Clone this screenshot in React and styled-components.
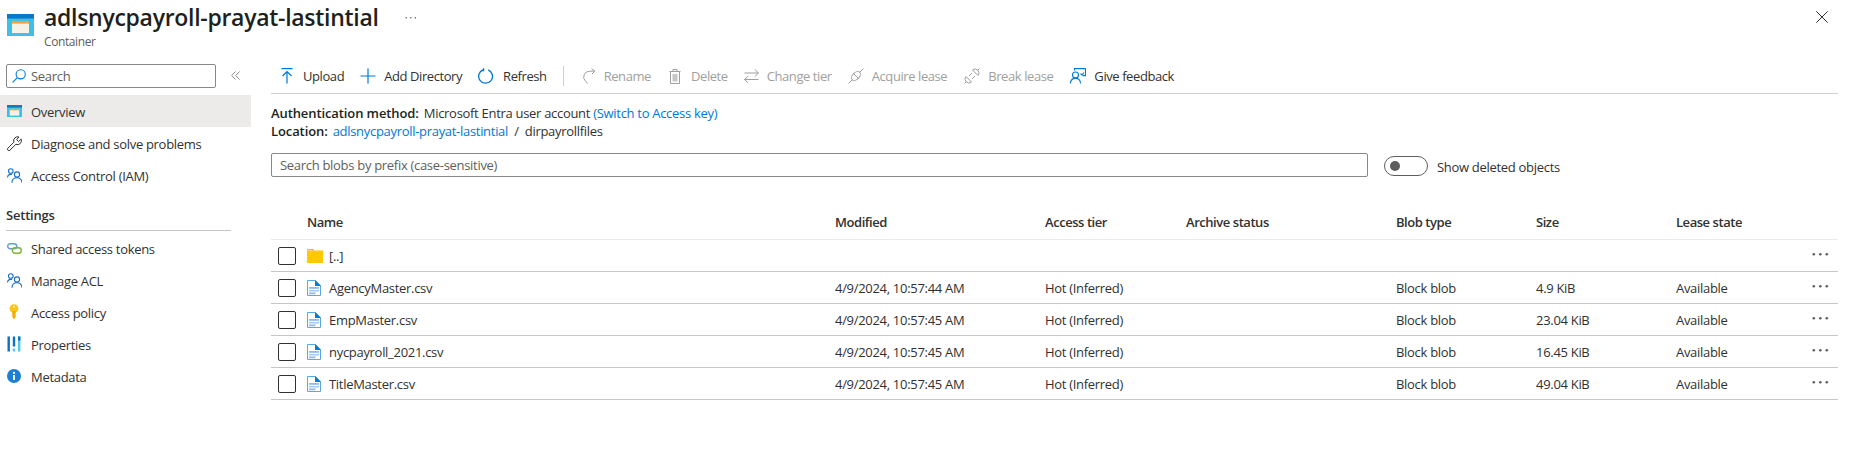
import React from 'react';
import styled, { createGlobalStyle } from 'styled-components';

const GlobalStyle = createGlobalStyle`
  html, body {
    margin: 0;
    padding: 0;
    overflow: hidden;
    background: #fff;
  }
  body {
    font-family: "Open Sans", "Noto Sans", "Liberation Sans", sans-serif;
    font-size: 13px;
    letter-spacing: -0.3px;
    color: #323130;
  }
  * {
    box-sizing: border-box;
  }
`;

const Page = styled.div`
  width: 1849px;
  height: 459px;
  display: flex;
  flex-direction: column;
`;

const Header = styled.header`
  height: 57px;
  display: flex;
  align-items: flex-start;
  padding: 0 21px 0 7px;
`;

const HeaderIcon = styled.div`
  display: flex;
  margin: 14px 10px 0 0;
`;

const TitleBlock = styled.div`
  display: flex;
  flex-direction: column;
`;

const Title = styled.h1`
  margin: 0;
  padding-top: 1px;
  font-size: 23px;
  line-height: 32px;
  font-weight: 600;
  letter-spacing: -0.29px;
  color: #201f1e;
`;

const Subtitle = styled.div`
  font-size: 12px;
  line-height: 16px;
  padding-top: 1px;
  letter-spacing: -0.4px;
  color: #605e5c;
`;

const TitleMore = styled.div`
  display: flex;
  margin: 16px 0 0 26px;
`;

const CloseButton = styled.div`
  display: flex;
  margin: 11px 0 0 auto;
`;

const Body = styled.div`
  display: flex;
  flex: 1;
  min-height: 0;
`;

const Sidebar = styled.nav`
  width: 251px;
  flex: none;
  margin-right: 20px;
`;

const SideSearchRow = styled.div`
  display: flex;
  align-items: flex-start;
  padding: 7px 0 0 6px;
  height: 38px;
`;

const SideSearch = styled.div`
  width: 210px;
  height: 24px;
  border: 1px solid #8a8886;
  border-radius: 2px;
  display: flex;
  align-items: center;
  gap: 5px;
  padding-left: 5px;
  color: #605e5c;
`;

const Collapse = styled.div`
  display: flex;
  margin: 7px 0 0 15px;
`;

const NavItem = styled.div`
  height: 32px;
  display: flex;
  align-items: center;
  gap: 9px;
  padding: 1px 0 0 6px;
  background: ${props => (props.$active ? '#edebe9' : 'transparent')};
`;

const NavIcon = styled.span`
  width: 16px;
  height: 16px;
  margin-top: -1px;
  display: flex;
  align-items: center;
  justify-content: center;
`;

const NavGroup = styled.div`
  margin-top: ${props => props.$top || 0}px;
`;

const SectionTitle = styled.div`
  margin: 16px 20px 0 6px;
  height: 24px;
  border-bottom: 1px solid #c8c6c4;
  font-weight: 600;
  font-size: 13px;
  line-height: 16px;
  letter-spacing: -0.2px;
`;

const Main = styled.main`
  flex: 1;
  margin-right: 11px;
  min-width: 0;
`;

const Toolbar = styled.div`
  height: 37px;
  padding: 2px 0 0 10px;
  display: flex;
  align-items: center;
  border-bottom: 1px solid #d2d0ce;
  letter-spacing: -0.42px;
`;

const ToolButton = styled.div`
  display: flex;
  align-items: center;
  margin-right: ${props => props.$gap ?? 16}px;
  color: ${props => (props.$disabled ? '#a19f9d' : '#323130')};
  white-space: nowrap;
`;

const ToolIcon = styled.span`
  display: flex;
  justify-content: center;
  width: ${props => props.$w}px;
  margin-right: ${props => props.$pad ?? 8}px;
`;

const ToolSeparator = styled.div`
  width: 1px;
  height: 20px;
  background: #d2d0ce;
  margin-right: 18px;
`;

const InfoBlock = styled.div`
  padding-top: 10px;
  line-height: 18px;
`;

const InfoRow = styled.div`
  display: flex;
  gap: 5px;
  white-space: pre;
`;

const InfoLabel = styled.span`
  font-weight: 600;
  letter-spacing: -0.1px;
  color: #201f1e;
`;

const InfoLink = styled.span`
  color: #0078d4;
`;

const FilterRow = styled.div`
  display: flex;
  align-items: center;
  margin-top: 13px;
`;

const FilterInput = styled.div`
  width: 1097px;
  height: 24px;
  border: 1px solid #8a8886;
  border-radius: 2px;
  padding-left: 8px;
  line-height: 23px;
  color: #605e5c;
`;

const Switch = styled.div`
  width: 44px;
  height: 20px;
  margin: 2px 9px 0 16px;
  border: 1px solid #605e5c;
  border-radius: 10px;
  display: flex;
  align-items: center;
  padding-left: 5px;
  &::before {
    content: '';
    width: 10px;
    height: 10px;
    border-radius: 50%;
    background: #605e5c;
  }
`;

const SwitchLabel = styled.span`
  margin-top: 3px;
`;

const Table = styled.div`
  margin-top: 30px;
`;

const Row = styled.div`
  display: grid;
  grid-template-columns: 36px 528px 210px 141px 210px 140px 140px 136px 26px;
  align-items: center;
  height: ${props => (props.$head ? 33 : 32)}px;
  padding-bottom: ${props => (props.$head ? 2 : 0)}px;
  border-bottom: 1px solid ${props => (props.$head ? '#edebe9' : '#c8c6c4')};
`;

const HeadCell = styled.div`
  font-weight: 600;
  letter-spacing: -0.45px;
  color: #323130;
  grid-column: ${props => props.$col || 'auto'};
`;

const Cell = styled.div`
  white-space: nowrap;
  color: #323130;
`;

const CheckBox = styled.div`
  width: 18px;
  height: 18px;
  margin-left: 7px;
  border: 1px solid #323130;
  border-radius: 2px;
`;

const NameCell = styled.div`
  display: flex;
  align-items: center;
  gap: ${props => props.$gap}px;
  white-space: nowrap;
`;

const RowMore = styled.div`
  display: flex;
  justify-content: flex-start;
  padding-bottom: 3px;
`;

/* drawings */

const ContainerIcon = ({ size }) => (
  <svg width={size} height={size * 0.82} viewBox="0 0 27 22">
    <rect x="0" y="0" width="27" height="22" fill="#3cc0e6" />
    <rect x="0" y="0" width="27" height="4.5" fill="#0a78c8" />
    <rect x="5" y="7" width="17" height="12" fill="#f6f3e6" />
    <rect x="5" y="7" width="17" height="2.5" fill="#f0a03c" />
  </svg>
);

const Dots = ({ color, r, spacing }) => (
  <svg width={spacing * 2 + r * 2 + 1} height={r * 2 + 2}>
    {[0, 1, 2].map(i => (
      <circle key={i} cx={r + 0.5 + i * spacing} cy={r + 1} r={r} fill={color} />
    ))}
  </svg>
);

const Line = ({ w, h, children, stroke = '#0078d4', sw = 1.2, vb }) => (
  <svg width={w} height={h} viewBox={vb || `0 0 ${w} ${h}`} fill="none" stroke={stroke} strokeWidth={sw}>
    {children}
  </svg>
);

const DISABLED = '#a19f9d';

const UploadIcon = () => (
  <Line w={12} h={16}>
    <path d="M0.5 0.7H11.5M6 15.5V3.5M1.5 8L6 3.5L10.5 8" />
  </Line>
);
const PlusIcon = () => (
  <Line w={16} h={16}>
    <path d="M8 0.5V15.5M0.5 8H15.5" />
  </Line>
);
const RefreshIcon = () => (
  <Line w={16} h={16} sw={1.3}>
    <path d="M10.2 1.9A6.9 6.9 0 1 1 5.2 1.8" />
    <path d="M5.6 0.2V2.6H3" />
  </Line>
);
const RenameIcon = () => (
  <Line w={14} h={16} stroke={DISABLED} sw={1}>
    <path d="M13 3.2H7.5A5.8 5.8 0 0 0 3.6 13.3L5.6 15.5" />
    <path d="M9.5 0.6L12.8 3.2L10 6" />
  </Line>
);
const TrashIcon = () => (
  <Line w={12} h={15} stroke={DISABLED} sw={1}>
    <path d="M0.5 2.5H11.5M4 2.5V0.5H8V2.5M1.5 2.5V14.5H10.5V2.5" />
    <rect x="3.5" y="5" width="5" height="7.5" fill="#c8c6c4" stroke="none" />
  </Line>
);
const SwapIcon = () => (
  <Line w={15} h={14} stroke={DISABLED} sw={1}>
    <path d="M0.5 4H14.5M10.8 0.5L14.5 4L10.8 7.5M14.5 10.5H0.5M4.2 7L0.5 10.5L4.2 14" />
  </Line>
);
const PlugIcon = () => (
  <Line w={16} h={16} stroke={DISABLED} sw={1}>
    <path d="M0.5 15.5L4.5 11.5M11.5 4.5L15.5 0.5" />
    <ellipse cx="8" cy="8" rx="5.3" ry="3.4" transform="rotate(-45 8 8)" />
    <path d="M5.5 5.5L10.5 10.5" />
  </Line>
);
const BreakPlugIcon = () => (
  <Line w={16} h={16} stroke={DISABLED} sw={1}>
    <path d="M0.5 15.5L2.5 13.5M13.5 2.5L15.5 0.5" />
    <path d="M2 8.5L7.5 14A3.9 3.9 0 0 1 2 8.5Z" />
    <path d="M8.5 2L14 7.5A3.9 3.9 0 0 0 8.5 2Z" />
    <path d="M5 8L8 5M8 11L11 8" />
  </Line>
);
const FeedbackIcon = () => (
  <Line w={16} h={16} stroke="#0078d4" sw={1.1}>
    <path d="M4.5 2.5V0.6H15.5V7.6H12.5" />
    <circle cx="5.5" cy="7" r="3" />
    <path d="M0.5 15.5C0.5 12 2.5 10.4 5.5 10.4S10.5 12 10.5 15.5" />
    <path d="M10.5 5.5L12 7L14 4.5" />
  </Line>
);
const SearchIcon = () => (
  <Line w={14} h={14} sw={1.1}>
    <circle cx="8.7" cy="5.3" r="4.6" />
    <path d="M5.4 8.6L0.6 13.4" />
  </Line>
);
const ChevronsIcon = () => (
  <Line w={9} h={9} stroke="#8a8886" sw={1}>
    <path d="M4.5 0.5L0.7 4.5L4.5 8.5M8.5 0.5L4.7 4.5L8.5 8.5" />
  </Line>
);
const CloseIcon = () => (
  <Line w={12} h={12} stroke="#323130" sw={1}>
    <path d="M0.3 0.3L11.7 11.7M11.7 0.3L0.3 11.7" />
  </Line>
);
const WrenchIcon = () => (
  <Line w={15} h={15} stroke="#323130" sw={1}>
    <path d="M14.2 3.1L11.6 5.6L9.6 3.6L12 1A4 4 0 0 0 6.9 6.2L0.9 12.2A1.4 1.4 0 0 0 2.9 14.2L8.9 8.3A4 4 0 0 0 14.2 3.1Z" />
  </Line>
);
const PeopleIcon = () => (
  <Line w={15} h={15} stroke="#1a6fc9" sw={1.1}>
    <circle cx="3.8" cy="3" r="2.3" />
    <circle cx="10" cy="6.5" r="2.6" />
    <path d="M0.6 9.5C0.6 7.5 1.8 6.4 3.8 6.4H5" />
    <path d="M5 14.8C5 11.5 7 9.8 10 9.8S15 11.5 15 14.8" />
  </Line>
);
const LinkIcon = () => (
  <svg width="15" height="11" viewBox="0 0 15 11" fill="none" strokeWidth="1.4">
    <rect x="0.7" y="0.7" width="9" height="5" rx="2.5" stroke="#5ea0d8" />
    <rect x="5.3" y="4.8" width="9" height="5.4" rx="2.7" stroke="#7fb239" />
  </svg>
);
const KeyIcon = () => (
  <svg width="10" height="16" viewBox="0 0 10 16">
    <circle cx="5" cy="4.6" r="4.4" fill="#fcc419" />
    <path d="M3.4 7H6.6V13L5 15.6L3.4 13Z" fill="#f5a900" />
    <circle cx="5" cy="2.7" r="1" fill="#fff3c4" />
  </svg>
);
const PropsIcon = () => (
  <svg width="14" height="16" viewBox="0 0 14 16">
    <rect x="0.5" y="0.5" width="2.4" height="15" fill="#0f70bf" />
    <rect x="5.8" y="0.5" width="2.4" height="10" fill="#0f70bf" />
    <rect x="5.8" y="12.5" width="2.4" height="3" fill="#50c8ef" />
    <rect x="11" y="0.5" width="2.4" height="15" fill="#50c8ef" />
    <rect x="11" y="0.5" width="2.4" height="4" fill="#0f70bf" />
  </svg>
);
const InfoIcon = () => (
  <svg width="14" height="14" viewBox="0 0 14 14">
    <circle cx="7" cy="7" r="7" fill="#1b7fd4" />
    <rect x="6.1" y="6" width="1.8" height="5" fill="#fff" />
    <circle cx="7" cy="3.9" r="1.1" fill="#fff" />
  </svg>
);
const FolderIcon = () => (
  <svg width="16" height="14" viewBox="0 0 16 14">
    <path d="M0 1C0 0.4 0.4 0 1 0H6L7.5 1.5H0Z" fill="#e8a800" />
    <rect x="0" y="1.5" width="16" height="12.5" fill="#ffc800" />
    <rect x="1" y="0.6" width="3.5" height="1" fill="#fde7a0" />
  </svg>
);
const FileIcon = () => (
  <svg width="14" height="16" viewBox="0 0 14 16">
    <path d="M0.5 0.5H8.5L13.5 5.5V15.5H0.5Z" fill="#fff" stroke="#5ba8e5" />
    <path d="M8 0L14 6H8Z" fill="#0f78d0" />
    <rect x="2" y="7" width="10" height="1.8" fill="#8fbcea" />
    <rect x="2" y="9.8" width="10" height="1.8" fill="#a8cdf0" />
    <rect x="2" y="12.5" width="6.5" height="1.8" fill="#8fbcea" />
  </svg>
);

const tools = [
  { label: 'Upload', icon: <UploadIcon />, w: 12, gap: 16, pad: 10 },
  { label: 'Add Directory', icon: <PlusIcon />, w: 16, gap: 16 },
  { label: 'Refresh', icon: <RefreshIcon />, w: 16, gap: 16, pad: 9 },
  { sep: true },
  { label: 'Rename', icon: <RenameIcon />, w: 14, gap: 18, disabled: true },
  { label: 'Delete', icon: <TrashIcon />, w: 12, gap: 16, pad: 10, disabled: true },
  { label: 'Change tier', icon: <SwapIcon />, w: 15, gap: 16, disabled: true },
  { label: 'Acquire lease', icon: <PlugIcon />, w: 16, gap: 17, disabled: true },
  { label: 'Break lease', icon: <BreakPlugIcon />, w: 16, gap: 17, disabled: true },
  { label: 'Give feedback', icon: <FeedbackIcon />, w: 16, gap: 0 },
];

const files = [
  { name: 'AgencyMaster.csv', modified: '4/9/2024, 10:57:44 AM', size: '4.9 KiB' },
  { name: 'EmpMaster.csv', modified: '4/9/2024, 10:57:45 AM', size: '23.04 KiB' },
  { name: 'nycpayroll_2021.csv', modified: '4/9/2024, 10:57:45 AM', size: '16.45 KiB' },
  { name: 'TitleMaster.csv', modified: '4/9/2024, 10:57:45 AM', size: '49.04 KiB' },
];

function App() {
  return (
    <Page>
      <GlobalStyle />
      <Header>
        <HeaderIcon><ContainerIcon size={27} /></HeaderIcon>
        <TitleBlock>
          <Title>adlsnycpayroll-prayat-lastintial</Title>
          <Subtitle>Container</Subtitle>
        </TitleBlock>
        <TitleMore><Dots color="#605e5c" r={0.8} spacing={4.5} /></TitleMore>
        <CloseButton><CloseIcon /></CloseButton>
      </Header>
      <Body>
        <Sidebar>
          <SideSearchRow>
            <SideSearch><SearchIcon />Search</SideSearch>
            <Collapse><ChevronsIcon /></Collapse>
          </SideSearchRow>
          <NavItem $active><NavIcon><ContainerIcon size={15} /></NavIcon>Overview</NavItem>
          <NavItem><NavIcon><WrenchIcon /></NavIcon>Diagnose and solve problems</NavItem>
          <NavItem><NavIcon><PeopleIcon /></NavIcon>Access Control (IAM)</NavItem>
          <SectionTitle>Settings</SectionTitle>
          <NavGroup $top={1}>
            <NavItem><NavIcon><LinkIcon /></NavIcon>Shared access tokens</NavItem>
            <NavItem><NavIcon><PeopleIcon /></NavIcon>Manage ACL</NavItem>
            <NavItem><NavIcon><KeyIcon /></NavIcon>Access policy</NavItem>
            <NavItem><NavIcon><PropsIcon /></NavIcon>Properties</NavItem>
            <NavItem><NavIcon><InfoIcon /></NavIcon>Metadata</NavItem>
          </NavGroup>
        </Sidebar>
        <Main>
          <Toolbar>
            {tools.map((t, i) =>
              t.sep ? (
                <ToolSeparator key={i} />
              ) : (
                <ToolButton key={t.label} $disabled={t.disabled} $gap={t.gap}>
                  <ToolIcon $w={t.w} $pad={t.pad}>{t.icon}</ToolIcon>
                  {t.label}
                </ToolButton>
              )
            )}
          </Toolbar>
          <InfoBlock>
            <InfoRow>
              <InfoLabel>Authentication method:</InfoLabel>
              <span>Microsoft Entra user account <InfoLink>(Switch to Access key)</InfoLink></span>
            </InfoRow>
            <InfoRow>
              <InfoLabel>Location:</InfoLabel>
              <span><InfoLink>adlsnycpayroll-prayat-lastintial</InfoLink>  /  dirpayrollfiles</span>
            </InfoRow>
          </InfoBlock>
          <FilterRow>
            <FilterInput>Search blobs by prefix (case-sensitive)</FilterInput>
            <Switch />
            <SwitchLabel>Show deleted objects</SwitchLabel>
          </FilterRow>
          <Table>
            <Row $head>
              <HeadCell $col="2">Name</HeadCell>
              <HeadCell>Modified</HeadCell>
              <HeadCell>Access tier</HeadCell>
              <HeadCell>Archive status</HeadCell>
              <HeadCell>Blob type</HeadCell>
              <HeadCell>Size</HeadCell>
              <HeadCell>Lease state</HeadCell>
            </Row>
            <Row>
              <CheckBox />
              <NameCell $gap={6}><FolderIcon />[..]</NameCell>
              <Cell /><Cell /><Cell /><Cell /><Cell /><Cell />
              <RowMore><Dots color="#605e5c" r={1.3} spacing={6.5} /></RowMore>
            </Row>
            {files.map(f => (
              <Row key={f.name}>
                <CheckBox />
                <NameCell $gap={8}><FileIcon />{f.name}</NameCell>
                <Cell>{f.modified}</Cell>
                <Cell>Hot (Inferred)</Cell>
                <Cell />
                <Cell>Block blob</Cell>
                <Cell>{f.size}</Cell>
                <Cell>Available</Cell>
                <RowMore><Dots color="#605e5c" r={1.3} spacing={6.5} /></RowMore>
              </Row>
            ))}
          </Table>
        </Main>
      </Body>
    </Page>
  );
}

export default App;
